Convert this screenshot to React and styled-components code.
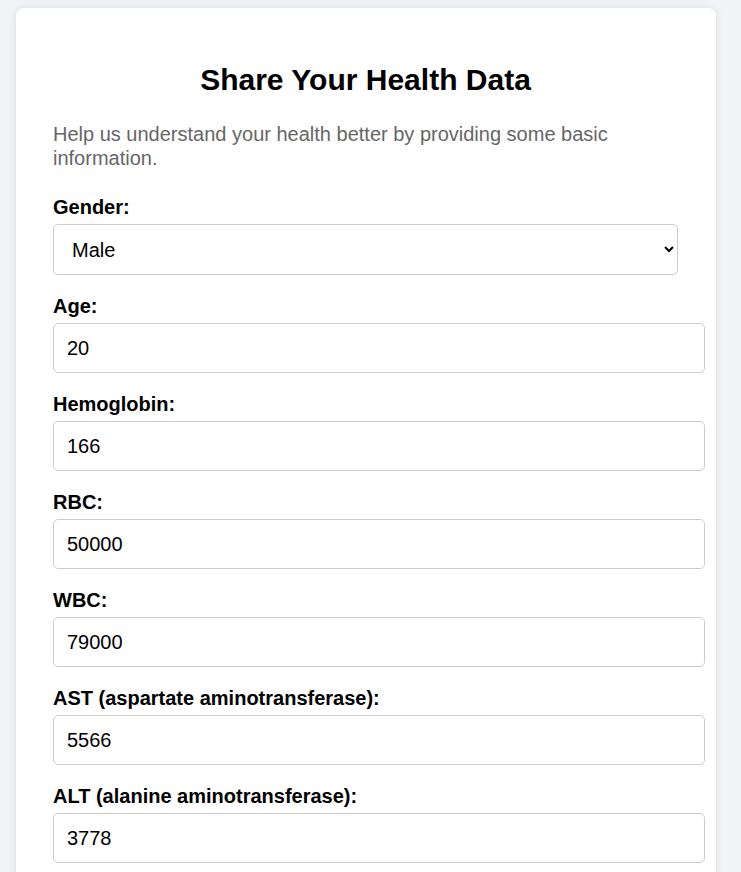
import React from 'react';
import styled, { createGlobalStyle } from 'styled-components';

const GlobalStyle = createGlobalStyle`
  html, body {
    margin: 0;
    overflow: hidden;
  }
  body {
    background-color: #f3f4f6;
    font-family: "Liberation Sans", Arial, sans-serif;
    color: #000;
  }
`;

const Page = styled.div`
  padding: 8px 0 0 16px;
`;

const Card = styled.div`
  width: 700px;
  box-sizing: border-box;
  background-color: #fff;
  border-radius: 8px;
  padding: 30px 38px 30px 37px;
  box-shadow: 0 0 10px rgba(0, 0, 0, 0.1);
`;

const Title = styled.h2`
  font-size: 30px;
  font-weight: bold;
  text-align: center;
  margin: 25px 0;
`;

const Intro = styled.p`
  font-size: 20px;
  line-height: 24px;
  color: #666;
  margin: 0 0 26px;
`;

const Field = styled.div`
  margin-bottom: 20px;
`;

const Label = styled.label`
  display: block;
  font-size: 20px;
  font-weight: bold;
  line-height: 23px;
  margin-bottom: 5px;
`;

const Select = styled.select`
  display: block;
  width: 100%;
  height: 51px;
  box-sizing: border-box;
  padding: 0 12px 0 14px;
  font-family: inherit;
  font-size: 20px;
  color: #000;
  background-color: #fff;
  border: 1px solid #ccc;
  border-radius: 5px;
`;

const Input = styled.input`
  display: block;
  width: 100%;
  height: 24px;
  padding: 12px 12px 12px 13px;
  font-family: inherit;
  font-size: 20px;
  color: #000;
  border: 1px solid #ccc;
  border-radius: 5px;
`;

const fields = [
  { id: 'age', label: 'Age:', value: '20' },
  { id: 'hemoglobin', label: 'Hemoglobin:', value: '166' },
  { id: 'rbc', label: 'RBC:', value: '50000' },
  { id: 'wbc', label: 'WBC:', value: '79000' },
  { id: 'ast', label: 'AST (aspartate aminotransferase):', value: '5566' },
  { id: 'alt', label: 'ALT (alanine aminotransferase):', value: '3778' },
];

const App = () => {
  return (
    <Page>
      <GlobalStyle />
      <Card>
        <Title>Share Your Health Data</Title>
        <Intro>
          Help us understand your health better by providing some basic information.
        </Intro>
        <form>
          <Field>
            <Label htmlFor="gender">Gender:</Label>
            <Select id="gender" defaultValue="male">
              <option value="male">Male</option>
              <option value="female">Female</option>
              <option value="other">Other</option>
            </Select>
          </Field>
          {fields.map((f) => (
            <Field key={f.id}>
              <Label htmlFor={f.id}>{f.label}</Label>
              <Input id={f.id} type="number" defaultValue={f.value} />
            </Field>
          ))}
        </form>
      </Card>
    </Page>
  );
};

export default App;
